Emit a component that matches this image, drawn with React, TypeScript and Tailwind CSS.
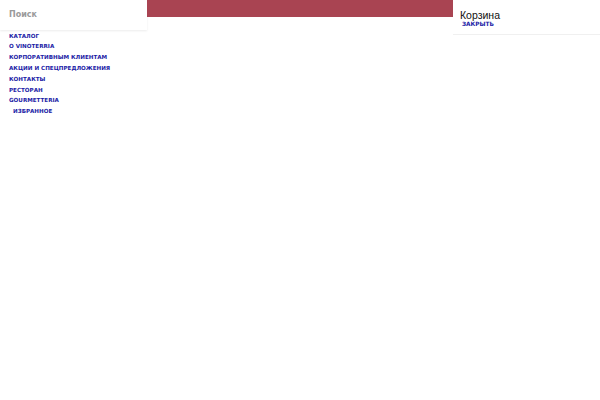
import React from 'react';

const menu = [
  'КАТАЛОГ',
  'О VINOTERRIA',
  'КОРПОРАТИВНЫМ КЛИЕНТАМ',
  'АКЦИИ И СПЕЦПРЕДЛОЖЕНИЯ',
  'КОНТАКТЫ',
  'РЕСТОРАН',
  'GOURMETTERIA',
];

export default function App() {
  return (
    <div className="relative w-[600px] h-[400px] bg-white overflow-hidden font-['DejaVu_Sans',sans-serif]">
      <div className="flex items-start">
        {/* Left menu */}
        <div className="w-[147px] shrink-0">
          <div className="h-[30px] flex items-center px-[9px] shadow-[0_1px_2px_rgba(0,0,0,0.08)]">
            <span className="text-[8px] font-bold text-[#9a9a9a]">Поиск</span>
          </div>
          <ul className="pt-[1px] px-[9px] flex flex-col">
            {menu.map((item) => (
              <li key={item} className="h-[10.8px] flex items-center text-[5.6px] font-bold text-[#1c1ca6] leading-none">
                {item}
              </li>
            ))}
            <li className="h-[10.8px] flex items-center pl-[4px] text-[5.6px] font-bold text-[#1c1ca6] leading-none">
              ИЗБРАННОЕ
            </li>
          </ul>
        </div>

        {/* Banner */}
        <div className="flex-1 h-[17px] bg-[#a94452]" />

        {/* Cart */}
        <div className="w-[147px] shrink-0">
          <div className="h-[35px] pl-[7px] pt-[9px] border-b border-[#f0f0f0]">
            <div className="font-['Liberation_Sans',Arial,sans-serif] text-[10.5px] text-[#111] leading-[12px]">Корзина</div>
            <div className="pl-[2px] text-[5.8px] font-bold text-[#1c1ca6] leading-[7px]">ЗАКРЫТЬ</div>
          </div>
        </div>
      </div>
    </div>
  );
}
